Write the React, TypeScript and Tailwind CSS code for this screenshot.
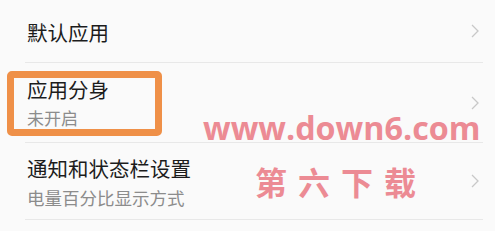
import React from "react";

function Chevron() {
  return (
    <svg width="10" height="16" viewBox="0 0 10 16" className="shrink-0">
      <polyline points="2,2 8,8 2,14" fill="none" stroke="#c8c8c8" strokeWidth="1.3" />
    </svg>
  );
}

export default function App() {
  return (
    <div
      className="relative w-[495px] h-[231px] overflow-hidden bg-[#fafafa]"
      style={{ fontFamily: '"Noto Sans CJK SC", "Noto Sans", sans-serif' }}
    >
      <div className="ml-[25px] mr-[12px]">
        {/* 默认应用 */}
        <div className="h-[63px] flex items-center justify-between pl-[2px] pr-[3px] border-b border-[#e8e8e8]">
          <span className="text-[20.5px] leading-none text-[#1c1c1c] pt-[2px]">默认应用</span>
          <Chevron />
        </div>

        {/* 应用分身 */}
        <div className="relative h-[80px] flex items-center justify-between pl-[2px] pr-[3px] border-b border-[#e8e8e8]">
          <div className="flex flex-col gap-[10px]">
            <span className="text-[20.5px] leading-none text-[#1c1c1c]">应用分身</span>
            <span className="text-[17px] leading-none text-[#8c8c8c]">未开启</span>
          </div>
          <Chevron />
          <div className="absolute left-[-18px] top-[8px] w-[155px] h-[65px] rounded-[5px] border-[7px] border-[#ef9048]" />
        </div>

        {/* 通知和状态栏设置 */}
        <div className="h-[77px] flex items-center justify-between pl-[2px] pr-[3px] border-b border-[#e8e8e8]">
          <div className="flex flex-col gap-[10px] pt-[2px]">
            <span className="text-[20.5px] leading-none text-[#1c1c1c]">通知和状态栏设置</span>
            <span className="text-[17.5px] leading-none text-[#8c8c8c]">电量百分比显示方式</span>
          </div>
          <Chevron />
        </div>
      </div>

      {/* watermark */}
      <div className="absolute left-[203px] top-[111px] flex flex-col items-start text-[#ec8b94]">
        <span className="text-[32.3px] leading-none font-bold" style={{ fontFamily: '"Open Sans", sans-serif' }}>
          www.down6.com
        </span>
        <span className="mt-[22px] ml-[52px] flex gap-[11px] text-[32px] leading-none font-bold">
          <span>第</span>
          <span>六</span>
          <span>下</span>
          <span>载</span>
        </span>
      </div>
    </div>
  );
}
